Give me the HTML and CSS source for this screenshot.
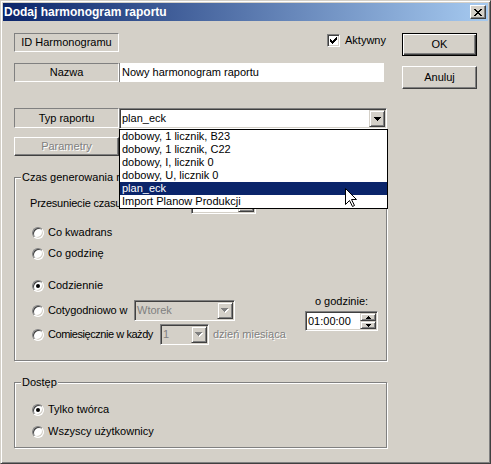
FILE: index.html
```html
<!DOCTYPE html>
<html lang="pl">
<head>
<meta charset="utf-8">
<title>Dodaj harmonogram raportu</title>
<link rel="stylesheet" href="styles.css">
</head>
<body>
<div class="window">
  <div class="titlebar">
    <span class="title">Dodaj harmonogram raportu</span>
    <span class="caption-btn">
      <svg width="8" height="7" viewBox="0 0 8 7" shape-rendering="crispEdges"><path fill="#000" d="M0 0h2v1H0zM6 0h2v1H6zM1 1h2v1H1zM5 1h2v1H5zM2 2h4v1H2zM3 3h2v1H3zM2 4h4v1H2zM1 5h2v1H1zM5 5h2v1H5zM0 6h2v1H0zM6 6h2v1H6z"/></svg>
    </span>
  </div>
  <div class="client">
    <div class="main">
      <div class="row row-id">
        <div class="caption">ID Harmonogramu</div>
        <div class="check">
          <span class="checkbox">
            <svg width="7" height="7" viewBox="0 0 7 7" shape-rendering="crispEdges"><path fill="#000" d="M6 0h1v1H6zM5 1h2v1H5zM0 2h1v1H0zM4 2h3v1H4zM0 3h2v1H0zM3 3h3v1H3zM0 4h5v1H0zM1 5h3v1H1zM2 6h1v1H2z"/></svg>
          </span>
          <span>Aktywny</span>
        </div>
      </div>
      <div class="row row-name">
        <div class="caption">Nazwa</div>
        <div class="edit">Nowy harmonogram raportu</div>
      </div>
      <div class="row row-type">
        <div class="caption caption-tall">Typ raportu</div>
        <div class="combo combo-type">
          <span class="combo-text">plan_eck</span>
          <span class="combo-btn">
            <svg width="7" height="4" viewBox="0 0 7 4" shape-rendering="crispEdges"><path fill="#000" d="M0 0h7v1H0zM1 1h5v1H1zM2 2h3v1H2zM3 3h1v1H3z"/></svg>
          </span>
          <ul class="droplist">
            <li>dobowy, 1 licznik, B23</li>
            <li>dobowy, 1 licznik, C22</li>
            <li>dobowy, I, licznik 0</li>
            <li>dobowy, U, licznik 0</li>
            <li class="selected">plan_eck</li>
            <li>Import Planow Produkcji</li>
          </ul>
          <svg class="cursor" width="13" height="20" viewBox="0 0 13 20"><path d="M0.5 0.5V16.5L4.5 12.5L7.5 18.5L9.5 17.5L6.5 11.5H11.5Z" fill="#fff" stroke="#000" stroke-width="1"/></svg>
        </div>
      </div>
      <div class="row row-params">
        <div class="btn btn-params disabled">Parametry</div>
      </div>

      <div class="group group-time">
        <div class="group-title">Czas generowania raportu</div>
        <div class="row shift-row">
          <span class="shift-label">Przesuniecie czasu w minutach:</span>
          <div class="combo combo-shift">
            <span class="combo-text">0</span>
            <span class="combo-btn">
              <svg width="7" height="4" viewBox="0 0 7 4" shape-rendering="crispEdges"><path fill="#000" d="M0 0h7v1H0zM1 1h5v1H1zM2 2h3v1H2zM3 3h1v1H3z"/></svg>
            </span>
          </div>
        </div>
        <div class="radio-row r-quarter"><span class="radio"></span>Co kwadrans</div>
        <div class="radio-row r-hour"><span class="radio"></span>Co godzinę</div>
        <div class="schedule">
          <div class="schedule-opts">
            <div class="radio-row r-daily"><span class="radio checked"></span>Codziennie</div>
            <div class="radio-row r-weekly">
              <span class="radio"></span>
              <span class="opt-label w-weekly">Cotygodniowo w</span>
              <div class="combo combo-disabled combo-day">
                <span class="combo-text">Wtorek</span>
                <span class="combo-btn">
                  <svg width="8" height="5" viewBox="0 0 8 5" shape-rendering="crispEdges"><path fill="#fff" d="M1 1h7v1H1zM2 2h5v1H2zM3 3h3v1H3zM4 4h1v1H4z"/><path fill="#808080" d="M0 0h7v1H0zM1 1h5v1H1zM2 2h3v1H2zM3 3h1v1H3z"/></svg>
                </span>
              </div>
            </div>
            <div class="radio-row r-monthly">
              <span class="radio"></span>
              <span class="opt-label w-monthly">Comiesięcznie w każdy</span>
              <div class="combo combo-disabled combo-num">
                <span class="combo-text">1</span>
                <span class="combo-btn">
                  <svg width="8" height="5" viewBox="0 0 8 5" shape-rendering="crispEdges"><path fill="#fff" d="M1 1h7v1H1zM2 2h5v1H2zM3 3h3v1H3zM4 4h1v1H4z"/><path fill="#808080" d="M0 0h7v1H0zM1 1h5v1H1zM2 2h3v1H2zM3 3h1v1H3z"/></svg>
                </span>
              </div>
              <span class="day-suffix">dzień miesiąca</span>
            </div>
          </div>
          <div class="time-box">
            <div class="time-label">o godzinie:</div>
            <div class="spin">
              <span class="spin-text">01:00:00</span>
              <span class="spin-btns">
                <span class="spin-btn"><svg width="5" height="3" viewBox="0 0 5 3" shape-rendering="crispEdges"><path fill="#000" d="M2 0h1v1H2zM1 1h3v1H1zM0 2h5v1H0z"/></svg></span>
                <span class="spin-btn"><svg width="5" height="3" viewBox="0 0 5 3" shape-rendering="crispEdges"><path fill="#000" d="M0 0h5v1H0zM1 1h3v1H1zM2 2h1v1H2z"/></svg></span>
              </span>
            </div>
          </div>
        </div>
      </div>

      <div class="group group-access">
        <div class="group-title">Dostęp</div>
        <div class="radio-row r-creator"><span class="radio checked"></span>Tylko twórca</div>
        <div class="radio-row r-all"><span class="radio"></span>Wszyscy użytkownicy</div>
      </div>
    </div>
    <div class="side">
      <div class="btn btn-default">OK</div>
      <div class="btn">Anuluj</div>
    </div>
  </div>
</div>
</body>
</html>
```

FILE: styles.css
```css
* { box-sizing: border-box; margin: 0; padding: 0; }
html, body { width: 491px; height: 464px; overflow: hidden; background: #d4d0c8; }
body {
  font-family: "Liberation Sans", Arial, sans-serif;
  font-size: 11px;
  line-height: 13px;
  color: #000;
}
ul { list-style: none; }
svg { display: block; }

.window {
  width: 491px;
  height: 464px;
  display: flex;
  flex-direction: column;
  padding: 2px;
  background: #d4d0c8;
  border: 1px solid;
  border-color: #d4d0c8 #404040 #404040 #d4d0c8;
  box-shadow: inset 1px 1px 0 #fff, inset -1px -1px 0 #808080;
}

.titlebar {
  flex: none;
  height: 18px;
  display: flex;
  align-items: center;
  padding: 0 2px 0 1px;
  background: linear-gradient(to right, #0a246a, #a6caf0);
  color: #fff;
}
.title {
  flex: 1;
  font-weight: bold;
  font-size: 12px;
  line-height: 18px;
  white-space: nowrap;
}
.caption-btn {
  width: 16px;
  height: 14px;
  display: flex;
  align-items: center;
  justify-content: center;
  background: #d4d0c8;
  border: 1px solid;
  border-color: #fff #404040 #404040 #fff;
  box-shadow: inset -1px -1px 0 #808080;
}

.client {
  flex: 1;
  display: flex;
  padding: 12px 0 0 11px;
}
.main { width: 373px; flex: none; }
.side {
  flex: none;
  width: 75px;
  margin-left: 15px;
  display: flex;
  flex-direction: column;
  gap: 10px;
}

.row { display: flex; align-items: center; }
.row-id { height: 19px; margin-bottom: 11px; }
.row-name { height: 19px; margin-bottom: 26px; }
.row-type { height: 21px; margin-bottom: 8px; align-items: flex-start; }
.row-params { height: 19px; }

.caption {
  flex: none;
  width: 105px;
  height: 19px;
  line-height: 17px;
  text-align: center;
  border: 1px solid;
  border-color: #808080 #fff #fff #808080;
}
.caption-tall { height: 20px; line-height: 18px; }

.check {
  align-self: flex-start;
  margin: 1px 0 0 208px;
  height: 13px;
  display: flex;
  align-items: center;
  gap: 5px;
}
.checkbox {
  width: 13px;
  height: 13px;
  display: flex;
  align-items: center;
  justify-content: center;
  background: #fff;
  border: 1px solid;
  border-color: #808080 #fff #fff #808080;
  box-shadow: inset 1px 1px 0 #404040, inset -1px -1px 0 #d4d0c8;
}

.edit {
  width: 265px;
  height: 19px;
  line-height: 19px;
  padding-left: 2px;
  background: #fff;
  border-left: 1px solid #808080;
  white-space: nowrap;
}

.combo {
  position: relative;
  flex: none;
  display: flex;
  height: 21px;
  padding: 1px;
  background: #fff;
  border: 1px solid;
  border-color: #808080 #fff #fff #808080;
  box-shadow: inset 1px 1px 0 #404040, inset -1px -1px 0 #d4d0c8;
}
.combo-text {
  flex: 1;
  padding-left: 1px;
  line-height: 17px;
  white-space: nowrap;
  overflow: hidden;
}
.combo-btn {
  flex: none;
  width: 16px;
  display: flex;
  align-items: center;
  justify-content: center;
  background: #d4d0c8;
  border: 1px solid;
  border-color: #d4d0c8 #404040 #404040 #d4d0c8;
  box-shadow: inset 1px 1px 0 #fff, inset -1px -1px 0 #808080;
}
.combo-type { width: 268px; }
.combo-shift { width: 65px; }
.combo-day { width: 101px; }
.combo-num { width: 49px; }
.combo-disabled { background: #d4d0c8; color: #808080; }

.droplist {
  position: absolute;
  left: -1px;
  top: 20px;
  width: 269px;
  z-index: 10;
  background: #fff;
  border: 1px solid #000;
}
.droplist li {
  height: 13px;
  line-height: 13px;
  padding-left: 2px;
  white-space: nowrap;
}
.droplist li.selected { background: #0a246a; color: #fff; }
.cursor {
  position: absolute;
  left: 225px;
  top: 79px;
  z-index: 11;
}

.btn {
  display: flex;
  align-items: center;
  justify-content: center;
  background: #d4d0c8;
  border: 1px solid;
  border-color: #fff #404040 #404040 #fff;
  box-shadow: inset -1px -1px 0 #808080;
  white-space: nowrap;
}
.side .btn { height: 23px; }
.btn-default {
  border-color: #000;
  box-shadow: inset 1px 1px 0 #fff, inset -1px -1px 0 #404040, inset -2px -2px 0 #808080;
}
.btn-params { width: 105px; height: 19px; }
.disabled { color: #808080; text-shadow: 1px 1px 0 #fff; }

.group {
  border: 1px solid #808080;
  box-shadow: inset 1px 1px 0 #fff, 1px 1px 0 #fff;
  padding: 0 8px 0 17px;
}
.group-time { margin-top: 21px; height: 184px; }
.group-access { margin-top: 21px; height: 66px; }
.group-title {
  width: max-content;
  margin: -7px 0 0 -11px;
  padding: 0 1px;
  line-height: 13px;
  background: #d4d0c8;
}

.shift-row { height: 21px; margin: 9px 0 0 -2px; }
.shift-label { width: 161px; flex: none; white-space: nowrap; overflow: hidden; letter-spacing: -0.2px; }

.radio-row {
  display: flex;
  align-items: center;
  height: 13px;
  white-space: nowrap;
}
.radio {
  flex: none;
  width: 12px;
  height: 12px;
  margin-right: 4px;
  display: flex;
  align-items: center;
  justify-content: center;
  border-radius: 50%;
  background: #fff;
  border: 1px solid;
  border-color: #808080 #fff #fff #808080;
  box-shadow: inset 1px 1px 0 #404040, inset -1px -1px 0 #d4d0c8;
}
.radio.checked::after {
  content: "";
  width: 4px;
  height: 4px;
  border-radius: 50%;
  background: #000;
}
.r-quarter { margin-top: 12px; }
.r-hour { margin-top: 8px; }
.schedule {
  display: flex;
  justify-content: space-between;
  align-items: flex-start;
  margin-top: 19px;
}
.r-weekly { height: 21px; margin-top: 8px; }
.r-monthly { height: 21px; margin-top: 3px; }
.opt-label { flex: none; }
.w-weekly { width: 86px; letter-spacing: -0.1px; }
.w-monthly { width: 112px; letter-spacing: -0.45px; }
.day-suffix { margin-left: 4px; color: #808080; text-shadow: 1px 1px 0 #fff; }

.time-box { width: 73px; margin-top: 16px; }
.time-label { text-align: center; line-height: 13px; }
.spin {
  display: flex;
  margin-top: 3px;
  width: 73px;
  height: 20px;
  padding: 1px;
  background: #fff;
  border: 1px solid;
  border-color: #808080 #fff #fff #808080;
  box-shadow: inset 1px 1px 0 #404040, inset -1px -1px 0 #d4d0c8;
}
.spin-text { flex: 1; padding-left: 1px; line-height: 16px; }
.spin-btns { flex: none; width: 16px; display: flex; flex-direction: column; }
.spin-btn {
  flex: 1;
  display: flex;
  align-items: center;
  justify-content: center;
  background: #d4d0c8;
  border: 1px solid;
  border-color: #d4d0c8 #404040 #404040 #d4d0c8;
  box-shadow: inset 1px 1px 0 #fff, inset -1px -1px 0 #808080;
}

.r-creator { margin-top: 14px; }
.r-all { margin-top: 9px; }
```
